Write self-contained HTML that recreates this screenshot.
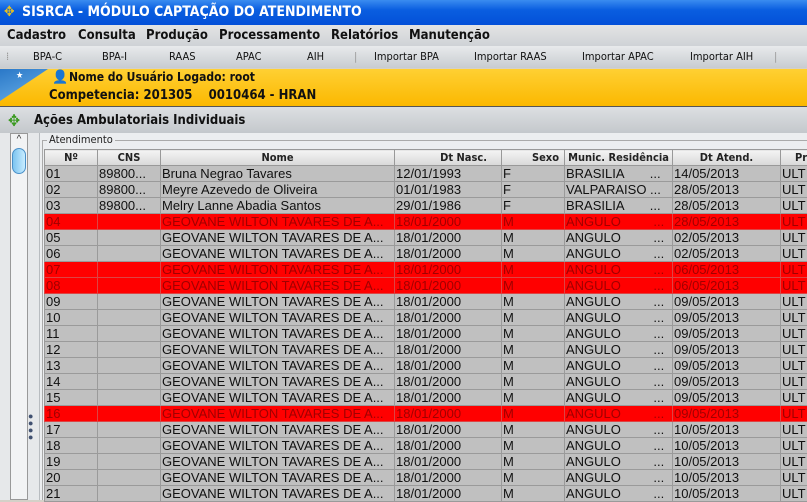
<!DOCTYPE html>
<html><head><meta charset="utf-8"><style>
*{margin:0;padding:0;box-sizing:border-box}
body{width:807px;height:500px;overflow:hidden;background:#d4d0c8;font-family:"Liberation Sans","DejaVu Sans",sans-serif;position:relative}
.title{position:absolute;left:0;top:0;width:807px;height:25px;background:linear-gradient(#3a8cf0,#0a5ee0 40%,#0350d8);color:#fff;font:bold 14px "DejaVu Sans Condensed","DejaVu Sans",sans-serif;line-height:25px;padding-left:22px}
.menu{position:absolute;top:25px;left:0;width:807px;height:21px;background:linear-gradient(#e4e4e4,#cfd2d6);font:bold 13px "DejaVu Sans Condensed","DejaVu Sans",sans-serif;color:#111;line-height:21px}
.menu span{position:absolute}
.tb{position:absolute;top:46px;left:0;width:807px;height:22px;background:linear-gradient(#e8eaec,#c8ccd0);font:11px "DejaVu Sans Condensed","DejaVu Sans",sans-serif;color:#111;line-height:22px}
.tb span{position:absolute}
.yel{position:absolute;top:69px;left:0;width:807px;height:38px;background:linear-gradient(#ffd033,#fbb800);border-bottom:1px solid #555;font:bold 13px "DejaVu Sans Condensed","DejaVu Sans",sans-serif;color:#111}
.blue{position:absolute;left:0;top:0;width:48px;height:32px;background:linear-gradient(160deg,#2a78c8,#6ab0e8);clip-path:polygon(0 0,48px 0,0 32px)}
.sec{position:absolute;top:107px;left:0;width:807px;height:26px;background:linear-gradient(#dcdfe2,#c4c8cc);font:bold 13px "DejaVu Sans Condensed","DejaVu Sans",sans-serif;line-height:28px;padding-left:34px;color:#111}
.left{position:absolute;top:133px;left:0;width:40px;height:367px;background:#e6e8ea;border-right:1px solid #b8bcc0}
.sb{position:absolute;left:10px;top:0;width:18px;height:367px;background:#f2f3f4;border:1px solid #999}
.grp{position:absolute;top:133px;left:40px;width:767px;height:367px;background:#eceef0}
.leg{position:absolute;left:47px;top:133px;font:11px "DejaVu Sans Condensed",sans-serif;color:#222;background:#eceef0;padding:0 2px}
table{position:absolute;left:44px;top:149px;width:776px;border-collapse:collapse;table-layout:fixed;font-size:13px}
td,th{height:16px;border:1px solid #8a8a8a;white-space:nowrap;overflow:hidden;padding:0 1px;line-height:15px}
th{background:linear-gradient(#f4f4f4,#d8d8d8);font:bold 11px "DejaVu Sans Condensed",sans-serif;color:#222;border-color:#999}
td{background:#c0c0c0;color:#111;border-color:#9a9a9a}
tr.r td{background:#ff0000;color:#a00000;border-color:#d44}
</style></head><body>
<div class="title"><span style="position:absolute;left:4px;top:0;color:#e8c020">✥</span>SISRCA - MÓDULO CAPTAÇÃO DO ATENDIMENTO</div>
<div class="menu"><span style="left:7px">Cadastro</span><span style="left:78px">Consulta</span><span style="left:146px">Produção</span><span style="left:219px">Processamento</span><span style="left:331px">Relatórios</span><span style="left:409px">Manutenção</span></div>
<div class="tb"><span style="left:6px;color:#999">⁞</span><span style="left:33px">BPA-C</span><span style="left:102px">BPA-I</span><span style="left:169px">RAAS</span><span style="left:236px">APAC</span><span style="left:307px">AIH</span><span style="left:354px;color:#999">|</span><span style="left:374px">Importar BPA</span><span style="left:474px">Importar RAAS</span><span style="left:582px">Importar APAC</span><span style="left:690px">Importar AIH</span><span style="left:774px;color:#999">|</span></div>
<div class="yel"><div class="blue"></div><span style="position:absolute;left:16px;top:2px;color:#fff;font-size:9px">★</span>
<span style="position:absolute;left:52px;top:1px;font-size:13px">👤</span>
<div style="position:absolute;left:69px;top:1px;font-size:12px">Nome do Usuário Logado: root</div>
<div style="position:absolute;left:49px;top:19px">Competencia: 201305&nbsp;&nbsp;&nbsp;&nbsp;0010464 - HRAN</div></div>
<div class="sec"><span style="position:absolute;left:8px;top:0;color:#3a9a20;font-size:16px">✥</span>Ações Ambulatoriais Individuais</div>
<div class="left"><div class="sb"><div style="text-align:center;font-size:10px;color:#333;height:14px">^</div><div style="width:14px;height:26px;margin-left:1px;border-radius:7px;background:linear-gradient(90deg,#7cc4f0,#c8ecff);border:1px solid #4a90c8"></div></div>
<div style="position:absolute;left:28px;top:280px;color:#405070;font-size:9px;line-height:7px">●<br>●<br>●<br>●</div></div>
<div class="grp"><div style="position:absolute;left:2px;top:7px;width:765px;height:360px;border:1px solid #aaa;border-right:none;border-bottom:none"></div></div>
<div class="leg">Atendimento</div>
<table>
<colgroup><col style="width:53px"><col style="width:63px"><col style="width:234px"><col style="width:107px"><col style="width:63px"><col style="width:108px"><col style="width:108px"><col style="width:40px"></colgroup>
<tr><th>Nº</th><th>CNS</th><th>Nome</th><th style="text-align:right;padding-right:14px">Dt Nasc.</th><th style="text-align:right;padding-right:5px">Sexo</th><th>Munic. Residência</th><th>Dt Atend.</th><th style="text-align:left;padding-left:14px">Pr</th></tr>
<tr><td>01</td><td>89800...</td><td>Bruna Negrao Tavares</td><td>12/01/1993</td><td>F</td><td>BRASILIA&nbsp;&nbsp;&nbsp;&nbsp;&nbsp;&nbsp;&nbsp;...</td><td>14/05/2013</td><td>ULT</td></tr>
<tr><td>02</td><td>89800...</td><td>Meyre Azevedo de Oliveira</td><td>01/01/1983</td><td>F</td><td>VALPARAISO ...</td><td>28/05/2013</td><td>ULT</td></tr>
<tr><td>03</td><td>89800...</td><td>Melry Lanne Abadia Santos</td><td>29/01/1986</td><td>F</td><td>BRASILIA&nbsp;&nbsp;&nbsp;&nbsp;&nbsp;&nbsp;&nbsp;...</td><td>28/05/2013</td><td>ULT</td></tr>
<tr class="r"><td>04</td><td></td><td>GEOVANE WILTON TAVARES DE A...</td><td>18/01/2000</td><td>M</td><td>ANGULO&nbsp;&nbsp;&nbsp;&nbsp;&nbsp;&nbsp;&nbsp;&nbsp;&nbsp;...</td><td>28/05/2013</td><td>ULT</td></tr>
<tr><td>05</td><td></td><td>GEOVANE WILTON TAVARES DE A...</td><td>18/01/2000</td><td>M</td><td>ANGULO&nbsp;&nbsp;&nbsp;&nbsp;&nbsp;&nbsp;&nbsp;&nbsp;&nbsp;...</td><td>02/05/2013</td><td>ULT</td></tr>
<tr><td>06</td><td></td><td>GEOVANE WILTON TAVARES DE A...</td><td>18/01/2000</td><td>M</td><td>ANGULO&nbsp;&nbsp;&nbsp;&nbsp;&nbsp;&nbsp;&nbsp;&nbsp;&nbsp;...</td><td>02/05/2013</td><td>ULT</td></tr>
<tr class="r"><td>07</td><td></td><td>GEOVANE WILTON TAVARES DE A...</td><td>18/01/2000</td><td>M</td><td>ANGULO&nbsp;&nbsp;&nbsp;&nbsp;&nbsp;&nbsp;&nbsp;&nbsp;&nbsp;...</td><td>06/05/2013</td><td>ULT</td></tr>
<tr class="r"><td>08</td><td></td><td>GEOVANE WILTON TAVARES DE A...</td><td>18/01/2000</td><td>M</td><td>ANGULO&nbsp;&nbsp;&nbsp;&nbsp;&nbsp;&nbsp;&nbsp;&nbsp;&nbsp;...</td><td>06/05/2013</td><td>ULT</td></tr>
<tr><td>09</td><td></td><td>GEOVANE WILTON TAVARES DE A...</td><td>18/01/2000</td><td>M</td><td>ANGULO&nbsp;&nbsp;&nbsp;&nbsp;&nbsp;&nbsp;&nbsp;&nbsp;&nbsp;...</td><td>09/05/2013</td><td>ULT</td></tr>
<tr><td>10</td><td></td><td>GEOVANE WILTON TAVARES DE A...</td><td>18/01/2000</td><td>M</td><td>ANGULO&nbsp;&nbsp;&nbsp;&nbsp;&nbsp;&nbsp;&nbsp;&nbsp;&nbsp;...</td><td>09/05/2013</td><td>ULT</td></tr>
<tr><td>11</td><td></td><td>GEOVANE WILTON TAVARES DE A...</td><td>18/01/2000</td><td>M</td><td>ANGULO&nbsp;&nbsp;&nbsp;&nbsp;&nbsp;&nbsp;&nbsp;&nbsp;&nbsp;...</td><td>09/05/2013</td><td>ULT</td></tr>
<tr><td>12</td><td></td><td>GEOVANE WILTON TAVARES DE A...</td><td>18/01/2000</td><td>M</td><td>ANGULO&nbsp;&nbsp;&nbsp;&nbsp;&nbsp;&nbsp;&nbsp;&nbsp;&nbsp;...</td><td>09/05/2013</td><td>ULT</td></tr>
<tr><td>13</td><td></td><td>GEOVANE WILTON TAVARES DE A...</td><td>18/01/2000</td><td>M</td><td>ANGULO&nbsp;&nbsp;&nbsp;&nbsp;&nbsp;&nbsp;&nbsp;&nbsp;&nbsp;...</td><td>09/05/2013</td><td>ULT</td></tr>
<tr><td>14</td><td></td><td>GEOVANE WILTON TAVARES DE A...</td><td>18/01/2000</td><td>M</td><td>ANGULO&nbsp;&nbsp;&nbsp;&nbsp;&nbsp;&nbsp;&nbsp;&nbsp;&nbsp;...</td><td>09/05/2013</td><td>ULT</td></tr>
<tr><td>15</td><td></td><td>GEOVANE WILTON TAVARES DE A...</td><td>18/01/2000</td><td>M</td><td>ANGULO&nbsp;&nbsp;&nbsp;&nbsp;&nbsp;&nbsp;&nbsp;&nbsp;&nbsp;...</td><td>09/05/2013</td><td>ULT</td></tr>
<tr class="r"><td>16</td><td></td><td>GEOVANE WILTON TAVARES DE A...</td><td>18/01/2000</td><td>M</td><td>ANGULO&nbsp;&nbsp;&nbsp;&nbsp;&nbsp;&nbsp;&nbsp;&nbsp;&nbsp;...</td><td>09/05/2013</td><td>ULT</td></tr>
<tr><td>17</td><td></td><td>GEOVANE WILTON TAVARES DE A...</td><td>18/01/2000</td><td>M</td><td>ANGULO&nbsp;&nbsp;&nbsp;&nbsp;&nbsp;&nbsp;&nbsp;&nbsp;&nbsp;...</td><td>10/05/2013</td><td>ULT</td></tr>
<tr><td>18</td><td></td><td>GEOVANE WILTON TAVARES DE A...</td><td>18/01/2000</td><td>M</td><td>ANGULO&nbsp;&nbsp;&nbsp;&nbsp;&nbsp;&nbsp;&nbsp;&nbsp;&nbsp;...</td><td>10/05/2013</td><td>ULT</td></tr>
<tr><td>19</td><td></td><td>GEOVANE WILTON TAVARES DE A...</td><td>18/01/2000</td><td>M</td><td>ANGULO&nbsp;&nbsp;&nbsp;&nbsp;&nbsp;&nbsp;&nbsp;&nbsp;&nbsp;...</td><td>10/05/2013</td><td>ULT</td></tr>
<tr><td>20</td><td></td><td>GEOVANE WILTON TAVARES DE A...</td><td>18/01/2000</td><td>M</td><td>ANGULO&nbsp;&nbsp;&nbsp;&nbsp;&nbsp;&nbsp;&nbsp;&nbsp;&nbsp;...</td><td>10/05/2013</td><td>ULT</td></tr>
<tr><td>21</td><td></td><td>GEOVANE WILTON TAVARES DE A...</td><td>18/01/2000</td><td>M</td><td>ANGULO&nbsp;&nbsp;&nbsp;&nbsp;&nbsp;&nbsp;&nbsp;&nbsp;&nbsp;...</td><td>10/05/2013</td><td>ULT</td></tr>
</table>
</body></html>
